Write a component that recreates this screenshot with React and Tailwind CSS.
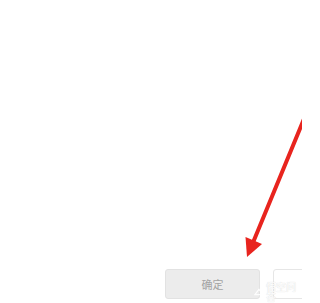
import React from 'react';

const App = () => {
  return (
    <div className="relative w-[302px] h-[303px] overflow-hidden bg-white flex flex-col justify-end" style={{ fontFamily: '"Noto Sans CJK SC", "Noto Sans", sans-serif' }}>
      <div className="flex items-start gap-[13px] pl-[165px] pb-[4px]">
        <div className="w-[95px] h-[30px] shrink-0 rounded-[3px] bg-[#ececec] border border-[#e2e2e2] flex items-center justify-center text-[11px] text-[#a3a3a3]">
          确定
        </div>
        <div className="w-[40px] h-[30px] shrink-0 rounded-[3px] bg-white border border-[#e6e6e6]"></div>
      </div>

      {/* watermark */}
      <div className="absolute left-[254px] top-[282px] flex items-center gap-[2px] text-[10px] leading-none text-white opacity-90" style={{ textShadow: '0 0 1px #c8c8c8' }}>
        <svg width="11" height="8" viewBox="0 0 11 8">
          <path d="M1 7 L5.5 1 L10 7 Z" fill="none" stroke="#ffffff" strokeWidth="1.4" />
        </svg>
        <span>悟空问答</span>
      </div>

      {/* red arrow */}
      <svg className="absolute inset-0 pointer-events-none" width="302" height="303" viewBox="0 0 302 303">
        <line x1="306" y1="114" x2="252" y2="245" stroke="#e8241e" strokeWidth="4" strokeLinecap="round" />
        <polygon points="247,257 245.5,237 262,244" fill="#e8241e" />
      </svg>
    </div>
  );
};

export default App;
